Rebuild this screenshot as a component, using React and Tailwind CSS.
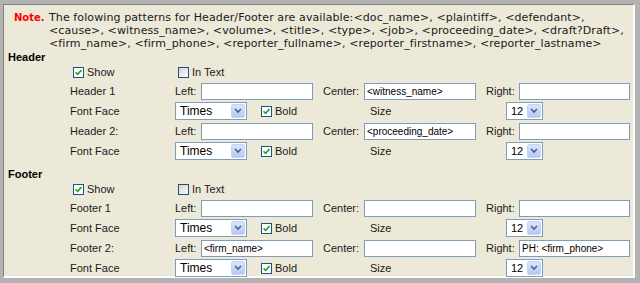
import React from "react";

const labelFont = { fontFamily: '"Liberation Sans", Arial, sans-serif' };

const Check = ({ checked, label }) => (
  <div className="flex items-center">
    <div
      className={
        "w-[11px] h-[11px] border border-[#1c5180] flex items-center justify-center " +
        (checked ? "bg-white" : "bg-gradient-to-br from-[#d6d6ce] to-[#fbfbfa]")
      }
    >
      {checked && (
        <svg width="7" height="7" viewBox="0 0 7 7">
          <path d="M0.5 3.2 L2.6 5.3 L6.5 1" fill="none" stroke="#21a121" strokeWidth="1.6" />
        </svg>
      )}
    </div>
    <span className="ml-[3px] text-[11px] text-[#1a1a1a]">{label}</span>
  </div>
);

const TextInput = ({ value, w }) => (
  <div
    className="h-[17px] border border-[#7f9db9] bg-white text-[10px] leading-[15px] px-[2px] text-black whitespace-nowrap overflow-hidden"
    style={{ width: w }}
  >
    {value}
  </div>
);

const Select = ({ value, w, small }) => (
  <div
    className="h-[18px] border border-[#7f9db9] bg-white flex items-center justify-between p-[1px]"
    style={{ width: w }}
  >
    <span className={"text-black " + (small ? "pl-[3px] text-[11px]" : "pl-[3px] text-[12px]")}>{value}</span>
    <div className="w-[14px] h-[14px] rounded-[2px] bg-gradient-to-b from-[#dbe5fc] to-[#b5c9f5] border border-[#c3d3fd] flex items-center justify-center">
      <svg width="8" height="6" viewBox="0 0 8 6">
        <path d="M1 1 L4 4 L7 1" fill="none" stroke="#4d6185" strokeWidth="1.6" />
      </svg>
    </div>
  </div>
);

const Row = ({ children }) => <div className="flex items-center h-[20px]">{children}</div>;

const Section = ({ title, name, rows }) => (
  <div>
    <div className="h-[14px] flex items-center font-bold text-[11px] text-black">{title}</div>
    <div className="flex items-center h-[17px]">
      <div className="w-[62px]" />
      <div className="w-[105px] pl-[3px]">
        <Check checked label="Show" />
      </div>
      <div className="pl-[3px]">
        <Check label="In Text" />
      </div>
    </div>
    {rows.map((r, i) => (
      <React.Fragment key={i}>
        <Row>
          <div className="w-[62px]" />
          <div className="w-[105px] text-[11px] text-[#1a1a1a]">
            {name} {i + 1}
            {i === 1 ? ":" : ""}
          </div>
          <div className="w-[145px] flex items-center">
            <span className="w-[26px] text-[11px] text-[#1a1a1a]">Left:</span>
            <TextInput value={r.left} w="112px" />
          </div>
          <div className="w-[165px] flex items-center pl-[3px]">
            <span className="w-[41px] text-[11px] text-[#1a1a1a]">Center:</span>
            <TextInput value={r.center} w="112px" />
          </div>
          <div className="flex items-center pl-[1px]">
            <span className="w-[33px] text-[11px] text-[#1a1a1a]">Right:</span>
            <TextInput value={r.right} w="111px" />
          </div>
        </Row>
        <Row>
          <div className="w-[62px]" />
          <div className="w-[105px] text-[11px] text-[#1a1a1a]">Font Face</div>
          <div className="w-[145px] flex items-center">
            <Select value="Times" w="72px" />
            <div className="ml-[14px]">
              <Check checked label="Bold" />
            </div>
          </div>
          <div className="w-[165px] pl-[50px] text-[11px] text-[#1a1a1a]">Size</div>
          <div className="pl-[21px]">
            <Select value="12" w="37px" small />
          </div>
        </Row>
      </React.Fragment>
    ))}
  </div>
);

export default function App() {
  return (
    <div className="w-[640px] h-[283px] bg-[#b3b3b3] pt-[4px] pl-[3px] pr-[5px] pb-[5px]" style={labelFont}>
      <div className="w-full h-full bg-[#ece9d8] border-t border-l border-[#808080] border-r-2 border-b-2 border-r-white border-b-white pl-[4px] pt-[6px]">
        <div
          className="flex leading-[13px] text-[#1a1a1a]"
          style={{ fontFamily: '"DejaVu Sans", Verdana, sans-serif' }}
        >
          <div className="w-[41px] pl-[6px] font-bold text-[10px] text-[#ff0000]">Note.</div>
          <div className="whitespace-nowrap text-[11px] tracking-[0.1px]">
            <div>
              The folowing patterns for Header/Footer are available:&lt;doc_name&gt;, &lt;plaintiff&gt;, &lt;defendant&gt;,
            </div>
            <div>
              &lt;cause&gt;, &lt;witness_name&gt;, &lt;volume&gt;, &lt;title&gt;, &lt;type&gt;, &lt;job&gt;, &lt;proceeding_date&gt;, &lt;draft?Draft&gt;,
            </div>
            <div>
              &lt;firm_name&gt;, &lt;firm_phone&gt;, &lt;reporter_fullname&gt;, &lt;reporter_firstname&gt;, &lt;reporter_lastname&gt;
            </div>
          </div>
        </div>
        <Section
          title="Header"
          name="Header"
          rows={[
            { left: "", center: "<witness_name>", right: "" },
            { left: "", center: "<proceeding_date>", right: "" },
          ]}
        />
        <div className="h-[6px]" />
        <Section
          title="Footer"
          name="Footer"
          rows={[
            { left: "", center: "", right: "" },
            { left: "<firm_name>", center: "", right: "PH: <firm_phone>" },
          ]}
        />
      </div>
    </div>
  );
}
